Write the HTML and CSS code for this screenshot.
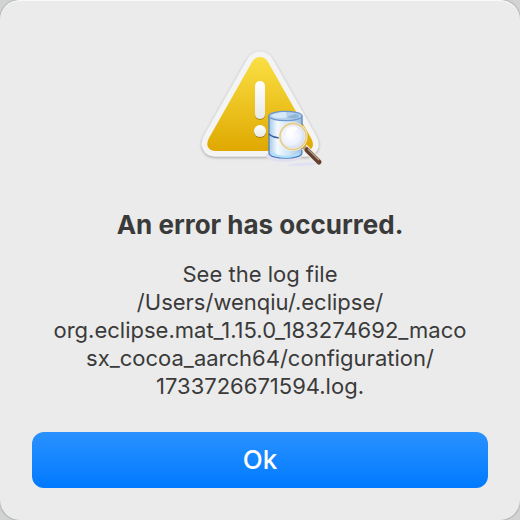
FILE: index.html
```html
<!DOCTYPE html>
<html lang="en">
<head>
<meta charset="utf-8">
<title>Error</title>
<link rel="stylesheet" href="styles.css">
</head>
<body>
<main class="dialog" role="alertdialog" aria-labelledby="title" aria-describedby="message">
  <svg class="icon" viewBox="0 0 128 128" aria-hidden="true">
    <defs>
      <linearGradient id="yellow" x1="0" y1="0" x2="0" y2="1">
        <stop offset="0" stop-color="#fae044"/>
        <stop offset="1" stop-color="#dfa800"/>
      </linearGradient>
      <linearGradient id="white" x1="0" y1="0" x2="0" y2="1">
        <stop offset="0" stop-color="#fff"/>
        <stop offset="1" stop-color="#e8e8e4"/>
      </linearGradient>
      <linearGradient id="metal" x1="0" y1="0" x2="1" y2="0">
        <stop offset="0" stop-color="#a3c8ea"/>
        <stop offset=".25" stop-color="#f2faff"/>
        <stop offset=".6" stop-color="#d0e6f7"/>
        <stop offset="1" stop-color="#9abde2"/>
      </linearGradient>
      <radialGradient id="lens" cx=".42" cy=".45" r=".6">
        <stop offset="0" stop-color="#fff"/>
        <stop offset=".6" stop-color="#edf1fc"/>
        <stop offset="1" stop-color="#c8d4f2"/>
      </radialGradient>
      <filter id="shadow" x="-10%" y="-10%" width="120%" height="125%">
        <feDropShadow dx="0" dy="1" stdDeviation="1.5" flood-color="#000" flood-opacity=".35"/>
      </filter>
      <filter id="mark" x="-50%" y="-20%" width="200%" height="150%">
        <feDropShadow dx="0" dy="1" stdDeviation=".7" flood-color="#765600" flood-opacity=".6"/>
      </filter>
    </defs>
    <path d="M56 18Q59 13 64 13Q69 13 72 18L115 94Q119 101 115 105Q113 107 108 107H20Q14 107 12 103Q10 100 13 94Z" fill="#f4f4f4" stroke="#f4f4f4" stroke-width="11" stroke-linejoin="round" filter="url(#shadow)"/>
    <path d="M56 18Q59 13 64 13Q69 13 72 18L115 94Q119 101 115 105Q113 107 108 107H20Q14 107 12 103Q10 100 13 94Z" fill="url(#yellow)"/>
    <g fill="url(#white)" filter="url(#mark)">
      <rect x="59" y="37" width="10" height="38" rx="5"/>
      <circle cx="64" cy="87" r="6"/>
    </g>
    <ellipse cx="88" cy="112" rx="18" ry="6" fill="#dfdff0"/>
    <path d="M92 121Q106 117 126 119Q116 123 92 122Z" fill="#e1e1f4"/>
    <path d="M73 72V109C73 116 106 116 106 109V72Z" fill="url(#metal)" stroke="#4d7dc3" stroke-width="1.2"/>
    <path d="M76 108C80 114 98 114 103 109" fill="none" stroke="#aee1fa" stroke-width="2"/>
    <path d="M73 90Q77 94 86 94" fill="none" stroke="#315f9e" stroke-width="1.6"/>
    <ellipse cx="89.5" cy="72" rx="16.5" ry="4.7" fill="#b4d0ea" stroke="#6d96cc" stroke-width="1.2"/>
    <path d="M75 72Q81 68 90 68L91 73Q83 76 75 72Z" fill="#d6e9f7"/>
    <path d="M91 73L99 70Q104 71 103 73Q98 76 91 73Z" fill="#8fb5d9"/>
    <path d="M108 103L124 119" stroke="#eee8e4" stroke-width="7"/>
    <path d="M106 101L112 107" stroke="#c4a45d" stroke-width="4"/>
    <path d="M111 106L123 118" stroke="#604030" stroke-width="5" stroke-linecap="round"/>
    <path d="M112 105L123 116" stroke="#b59a86" stroke-width="1.5"/>
    <circle cx="97" cy="92.5" r="13" fill="url(#lens)" stroke="#f7eccd" stroke-width="3"/>
    <circle cx="97" cy="92.5" r="13" fill="none" stroke="#dfc991" stroke-width="1.3"/>
    <path d="M91 85Q96 81 102 84Q99 90 90 92Z" fill="#fff" opacity=".8"/>
  </svg>
  <h1 class="title" id="title">An error has occurred.</h1>
  <p class="message" id="message">See the log file<br>/Users/wenqiu/.eclipse/<br>org.eclipse.mat_1.15.0_183274692_maco<wbr>sx_cocoa_aarch64/configuration/<br>1733726671594.log.</p>
  <button class="ok" type="button">Ok</button>
</main>
</body>
</html>
```
FILE: styles.css
```css
* {
  box-sizing: border-box;
}

body {
  margin: 0;
  background: #d2d3d3;
  color: #3a3a3a;
  font-family: Inter, "Liberation Sans", sans-serif;
}

.dialog {
  display: flex;
  flex-direction: column;
  align-items: center;
  min-height: 100vh;
  padding: 44px 32px 32px;
  border-radius: 20px;
  background: #ebebeb;
  box-shadow: inset 0 1px #f8f8f8, 0 0 2px #777;
  text-align: center;
}

.icon {
  width: 128px;
  height: 128px;
}

.title {
  margin: 37px 0 0;
  font-size: 26px;
  font-weight: 700;
  line-height: 32px;
}

.message {
  margin: 19px 0 0;
  font-size: 22px;
  line-height: 28px;
}

.ok {
  width: 100%;
  height: 56px;
  margin-top: auto;
  border: 0;
  border-radius: 12px;
  background: linear-gradient(#2a91ff, #007aff);
  color: #fff;
  font: 500 26px/32px Inter, "Liberation Sans", sans-serif;
}
```
